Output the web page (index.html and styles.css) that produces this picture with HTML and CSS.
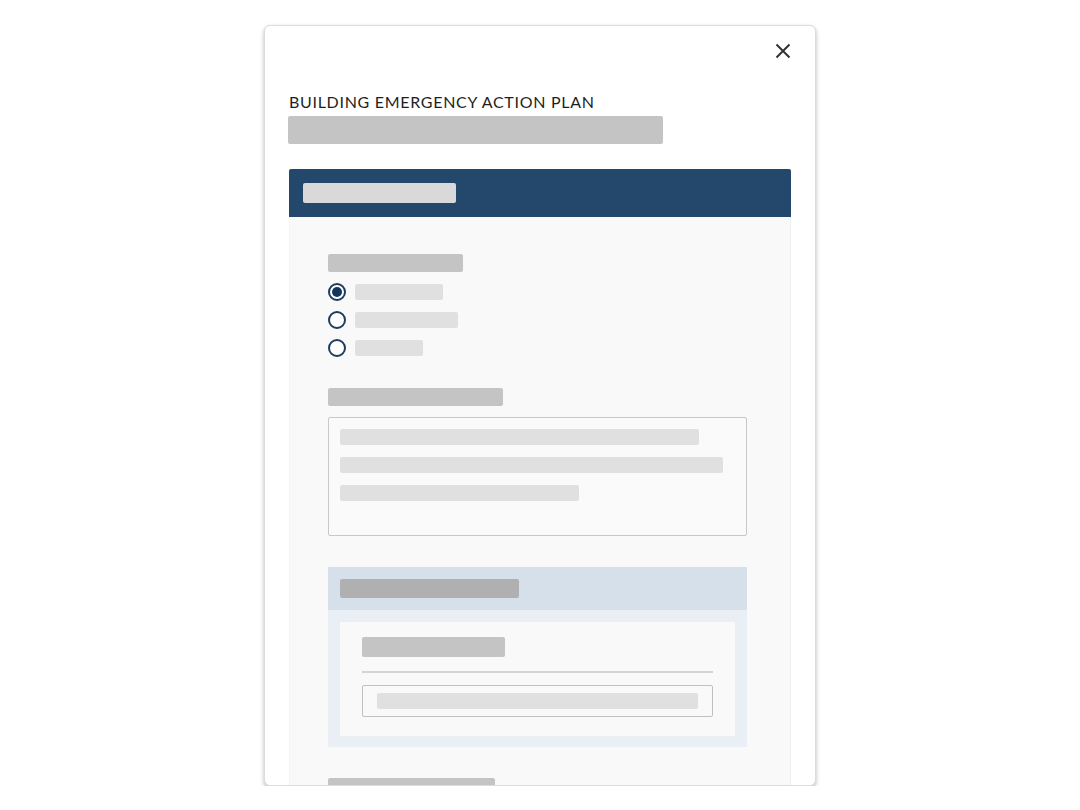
FILE: index.html
```html
<!DOCTYPE html>
<html lang="en">
<head>
<meta charset="utf-8">
<title>Building Emergency Action Plan</title>
<link rel="stylesheet" href="styles.css">
</head>
<body>
<div class="modal">
  <div class="modal-top">
    <button class="close" aria-label="Close">
      <svg width="16" height="16" viewBox="0 0 16 16"><path d="M1.5 1.5 L14.5 14.5 M14.5 1.5 L1.5 14.5" stroke="#333" stroke-width="2" stroke-linecap="butt" fill="none"/></svg>
    </button>
  </div>
  <h1 class="title">BUILDING EMERGENCY ACTION PLAN</h1>
  <div class="bar bar-subtitle"></div>

  <div class="card">
    <div class="card-head"><div class="bar bar-head"></div></div>
    <div class="card-body">
      <div class="bar label w135"></div>
      <div class="radios">
        <div class="radio-row"><span class="radio checked"></span><span class="bar opt w88"></span></div>
        <div class="radio-row"><span class="radio"></span><span class="bar opt w103"></span></div>
        <div class="radio-row"><span class="radio"></span><span class="bar opt w68"></span></div>
      </div>

      <div class="bar label w175 mt26"></div>
      <div class="textarea">
        <div class="bar line w359"></div>
        <div class="bar line w383"></div>
        <div class="bar line w239"></div>
      </div>

      <div class="panel">
        <div class="panel-head"><div class="bar panel-title"></div></div>
        <div class="panel-body">
          <div class="panel-inner">
            <div class="bar inner-label"></div>
            <div class="divider"></div>
            <div class="input"><div class="bar input-line"></div></div>
          </div>
        </div>
      </div>

      <div class="bar label w167 mt31"></div>
    </div>
  </div>
</div>
</body>
</html>
```

FILE: styles.css
```css
html, body {
  margin: 0;
  padding: 0;
  background: #ffffff;
}
body {
  font-family: Lato, "Open Sans", "Liberation Sans", sans-serif;
}
.modal {
  box-sizing: border-box;
  width: 552px;
  height: 761px;
  margin: 25px 0 0 264px;
  background: #ffffff;
  border: 1px solid #dcdcdc;
  border-radius: 6px;
  box-shadow: 0 2px 4px rgba(0, 0, 0, 0.28);
  padding: 0 24px;
  overflow: hidden;
}
.modal-top {
  display: flex;
  justify-content: flex-end;
  padding-top: 17px;
}
.close {
  border: 0;
  background: none;
  padding: 0;
  width: 16px;
  height: 16px;
  display: block;
}
.close svg { display: block; }
.title {
  margin: 33px 0 0 0;
  font-size: 16px;
  line-height: 20px;
  font-weight: 400;
  letter-spacing: 0.7px;
  color: #1f1f1f;
}
.bar {
  display: block;
  border-radius: 2px;
}
.bar-subtitle {
  margin-top: 4px;
  width: 375px;
  height: 28px;
  background: #c4c4c4;
  margin-left: -1px;
}
.card {
  margin-top: 25px;
}
.card-head {
  height: 48px;
  background: #24486c;
  border-radius: 2px 2px 0 0;
  padding: 14px 0 0 14px;
  box-sizing: border-box;
}
.bar-head {
  width: 153px;
  height: 20px;
  background: #d9d9d9;
}
.card-body {
  background: #f9f9f9;
  border-right: 1px solid #eeeeee;
  border-left: 1px solid #f4f4f4;
  padding: 37px 0 40px 38px;
  min-height: 600px;
}
.label {
  height: 18px;
  background: #c4c4c4;
}
.w135 { width: 135px; }
.w175 { width: 175px; }
.w167 { width: 167px; }
.mt26 { margin-top: 26px; }
.mt31 { margin-top: 31px; }
.radios {
  margin-top: 6px;
  display: flex;
  flex-direction: column;
}
.radio-row {
  height: 28px;
  display: flex;
  align-items: center;
  gap: 9px;
}
.radio {
  box-sizing: border-box;
  width: 18px;
  height: 18px;
  border: 2px solid #1e3d5f;
  border-radius: 50%;
  background: #ffffff;
  display: flex;
  align-items: center;
  justify-content: center;
}
.radio.checked::after {
  content: "";
  width: 10px;
  height: 10px;
  border-radius: 50%;
  background: #14365a;
}
.opt {
  height: 16px;
  background: #e0e0e0;
}
.w88 { width: 88px; }
.w103 { width: 103px; }
.w68 { width: 68px; }
.textarea {
  box-sizing: border-box;
  margin-top: 11px;
  width: 419px;
  height: 119px;
  border: 1px solid #c8c8c8;
  border-radius: 2px;
  background: #fafafa;
  padding: 11px 0 0 11px;
  display: flex;
  flex-direction: column;
  gap: 12px;
}
.line {
  height: 16px;
  background: #e0e0e0;
}
.w359 { width: 359px; }
.w383 { width: 383px; }
.w239 { width: 239px; }
.panel {
  margin-top: 31px;
  width: 419px;
}
.panel-head {
  box-sizing: border-box;
  height: 43px;
  background: #d6e0ea;
  padding: 12px 0 0 12px;
}
.panel-title {
  width: 179px;
  height: 19px;
  background: #b0b0b0;
}
.panel-body {
  background: #e9eff5;
  padding: 12px 12px 11px 12px;
}
.panel-inner {
  box-sizing: border-box;
  height: 114px;
  background: #f9f9f9;
  padding: 15px 22px 0 22px;
}
.inner-label {
  width: 143px;
  height: 20px;
  background: #c4c4c4;
}
.divider {
  margin-top: 14px;
  height: 2px;
  background: #d4d4d4;
}
.input {
  box-sizing: border-box;
  margin-top: 12px;
  height: 32px;
  border: 1px solid #c0c0c0;
  border-radius: 2px;
  padding: 7px 14px 0 14px;
}
.input-line {
  height: 16px;
  background: #e0e0e0;
}
```
